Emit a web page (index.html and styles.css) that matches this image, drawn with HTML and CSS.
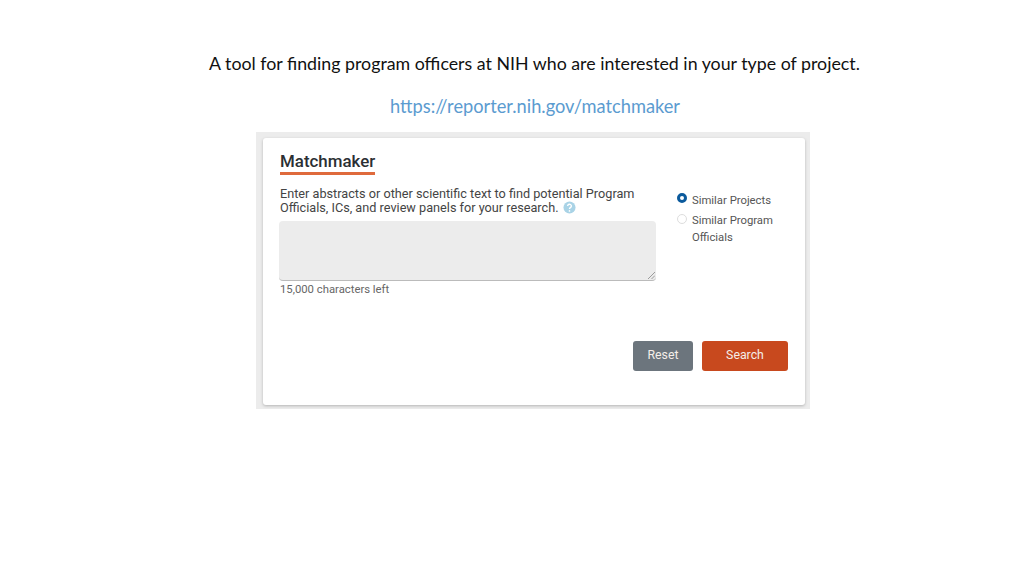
FILE: index.html
```html
<!DOCTYPE html>
<html lang="en">

<head>
    <meta charset="UTF-8">
    <title>Matchmaker</title>
    <link rel="stylesheet" href="styles.css">
</head>

<body>
    <p class="intro">A tool for finding program officers at NIH who are interested in your type of project.</p>
    <p class="link">https://reporter.nih.gov/matchmaker</p>

    <div class="shot">
        <div class="card">
            <h1 class="title">Matchmaker</h1>
            <div class="form-row">
                <div class="text-col">
                    <p class="help">Enter abstracts or other scientific text to find potential Program
                        Officials, ICs, and review panels for your research.
                        <svg class="help-icon" viewBox="0 0 14 14" width="13" height="13">
                            <circle cx="7" cy="7" r="6.5" fill="#a9d3e6" />
                            <path d="M5 5.4a2 2 0 1 1 3 1.8c-.7.4-1 .8-1 1.5" fill="none" stroke="#fff" stroke-width="1.5" />
                            <circle cx="7" cy="10.7" r="0.9" fill="#fff" />
                        </svg>
                    </p>
                    <div class="textarea">
                        <svg class="grip" viewBox="0 0 8 8" width="8" height="8">
                            <path d="M1 8L8 1M4.5 8L8 4.5" stroke="#888" stroke-width="0.8" />
                        </svg>
                    </div>
                    <div class="counter">15,000 characters left</div>
                </div>
                <div class="radios">
                    <div class="radio-row">
                        <span class="radio checked"></span>
                        <span>Similar Projects</span>
                    </div>
                    <div class="radio-row">
                        <span class="radio"></span>
                        <span>Similar Program<br>Officials</span>
                    </div>
                </div>
            </div>
            <div class="buttons">
                <div class="btn reset">Reset</div>
                <div class="btn search">Search</div>
            </div>
        </div>
    </div>
</body>

</html>
```

FILE: styles.css
```css
body {
    margin: 0;
    height: 576px;
    overflow: hidden;
    background: #fff;
    font-family: "Roboto", sans-serif;
    display: flex;
    flex-direction: column;
    align-items: center;
}

.intro {
    margin: 51px 0 0 45px;
    font-family: "Lato", sans-serif;
    font-size: 17.8px;
    line-height: 24px;
    color: #111;
}

.link {
    margin: 19px 0 0 46px;
    font-family: "Lato", sans-serif;
    font-size: 18.25px;
    line-height: 24px;
    color: #5b9bd0;
}

.shot {
    box-sizing: border-box;
    width: 554px;
    height: 277px;
    margin-top: 14px;
    margin-left: 42px;
    padding: 6px 5px 4px 7px;
    background: #ececec;
}

.card {
    box-sizing: border-box;
    height: 100%;
    padding: 13px 17px 0;
    background: #fff;
    border-radius: 3px;
    box-shadow: 0 1px 3px #b5b5b5;
}

.title {
    display: inline-block;
    margin: 0;
    padding-bottom: 1px;
    font-size: 16.9px;
    line-height: 20px;
    font-weight: 500;
    color: #2b2f33;
    border-bottom: 3px solid #df6a3c;
}

.form-row {
    display: flex;
    margin-top: 12px;
}

.text-col {
    width: 376px;
}

.help {
    margin: 0;
    font-size: 12.7px;
    line-height: 14px;
    color: #444;
}

.help-icon {
    vertical-align: -2px;
    margin-left: 1px;
}

.textarea {
    position: relative;
    height: 59px;
    margin-top: 6px;
    margin-left: -1px;
    background: #ececec;
    border-radius: 4px;
    border-bottom: 1px solid #bbb;
}

.grip {
    position: absolute;
    right: 1px;
    bottom: 1px;
}

.counter {
    margin-top: 2px;
    font-size: 11.3px;
    line-height: 14px;
    color: #666;
}

.radios {
    margin-left: 21px;
    margin-top: 5px;
    font-size: 11.3px;
    line-height: 17px;
    color: #555;
}

.radio-row {
    display: flex;
    gap: 5px;
    margin-bottom: 3px;
}

.radio {
    box-sizing: border-box;
    width: 10px;
    height: 10px;
    margin-top: 2px;
    border-radius: 50%;
    border: 1px solid #ddd;
    background: #fff;
}

.radio.checked {
    margin-top: 1px;
    border: 3px solid #0b5a9c;
}

.buttons {
    display: flex;
    justify-content: flex-end;
    gap: 9px;
    margin-top: 44px;
}

.btn {
    height: 30px;
    font-size: 12.3px;
    line-height: 29px;
    text-align: center;
    color: #f4eee9;
    border-radius: 3px;
}

.reset {
    width: 60px;
    background: #6c757d;
}

.search {
    width: 86px;
    background: #c8491e;
}
```
